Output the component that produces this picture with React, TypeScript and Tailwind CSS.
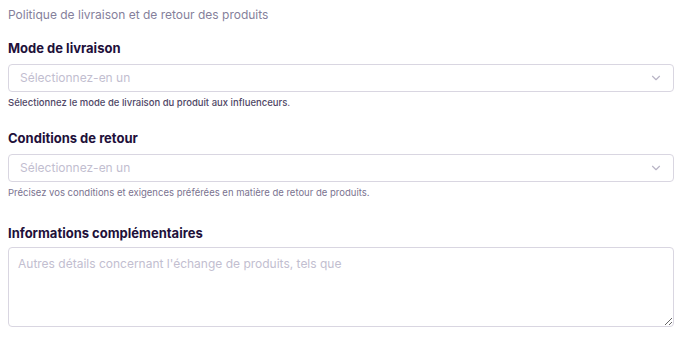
import React from 'react';

function Chevron() {
  return (
    <svg viewBox="0 0 24 24" className="w-[14px] h-[14px] text-[#b9b5c6]" fill="none" stroke="currentColor" strokeWidth={2} strokeLinecap="round" strokeLinejoin="round">
      <path d="M6 9l6 6 6-6" />
    </svg>
  );
}

function SelectField({ label, help, strong }: { label: string; help: string; strong?: boolean }) {
  return (
    <div className="flex flex-col">
      <div className="text-[13px] leading-[20px] font-bold text-[#22103a] mb-[6px]">{label}</div>
      <div className="h-[28px] rounded-[4px] border border-[#d9d6e1] bg-white flex items-center justify-between pl-[11px] pr-[10px]">
        <span className="text-[12px] text-[#c2bed0]">Sélectionnez-en un</span>
        <Chevron />
      </div>
      <div className={`mt-[5px] text-[9.5px] leading-[12px] ${strong ? 'font-medium text-[#4f4766]' : 'text-[#7a7390]'}`}>{help}</div>
    </div>
  );
}

export default function App() {
  return (
    <div className="w-[688px] h-[342px] bg-white pl-[8px] pr-[14px] pt-[6px]" style={{ fontFamily: 'Inter, "Noto Sans", sans-serif' }}>
      <div className="text-[12px] leading-[18px] text-[#857f9b]">Politique de livraison et de retour des produits</div>
      <div className="mt-[14px] flex flex-col gap-[19px]">
        <SelectField label="Mode de livraison" help="Sélectionnez le mode de livraison du produit aux influenceurs." strong />
        <SelectField label="Conditions de retour" help="Précisez vos conditions et exigences préférées en matière de retour de produits." />
        <div className="flex flex-col mt-[5px]">
          <div className="text-[13px] leading-[20px] font-bold text-[#22103a] mb-[4px]">Informations complémentaires</div>
          <textarea
            className="h-[80px] rounded-[4px] border border-[#d9d6e1] bg-white px-[9px] py-[7px] text-[12px] placeholder:text-[#c2bed0] outline-none resize-y"
            placeholder="Autres détails concernant l'échange de produits, tels que"
          />
        </div>
      </div>
    </div>
  );
}
